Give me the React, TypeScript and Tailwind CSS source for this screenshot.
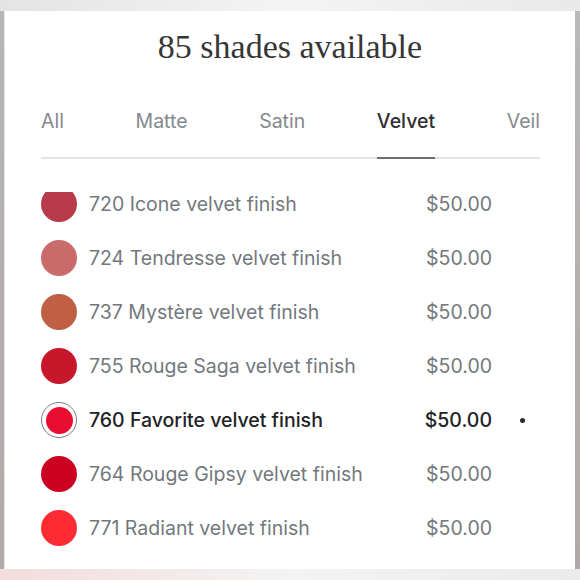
import React from 'react';

interface Shade {
  name: string;
  color: string;
  price: string;
  selected?: boolean;
}

const tabs = ['All', 'Matte', 'Satin', 'Velvet', 'Veil'];

const shades: Shade[] = [
  { name: '720 Icone velvet finish', color: '#b83b4b', price: '$50.00' },
  { name: '724 Tendresse velvet finish', color: '#c96b6b', price: '$50.00' },
  { name: '737 Mystère velvet finish', color: '#bf5f44', price: '$50.00' },
  { name: '755 Rouge Saga velvet finish', color: '#c8172a', price: '$50.00' },
  { name: '760 Favorite velvet finish', color: '#e80d30', price: '$50.00', selected: true },
  { name: '764 Rouge Gipsy velvet finish', color: '#cc0020', price: '$50.00' },
  { name: '771 Radiant velvet finish', color: '#ff2b33', price: '$50.00' },
];

const ShadeRow: React.FC<{ shade: Shade }> = ({ shade }) => (
  <div className="h-[54px] flex items-center shrink-0">
    {shade.selected ? (
      <div className="w-9 h-9 rounded-full border-[1.5px] border-[#7a7a7a] flex items-center justify-center shrink-0">
        <div className="w-[27px] h-[27px] rounded-full" style={{ backgroundColor: shade.color }}></div>
      </div>
    ) : (
      <div className="w-9 h-9 rounded-full shrink-0" style={{ backgroundColor: shade.color }}></div>
    )}
    <div
      className={`ml-3 flex-1 text-[19.5px] leading-[18px] ${
        shade.selected ? 'text-[#222326] font-medium' : 'text-[#73787d]'
      }`}
    >
      {shade.name}
    </div>
    <div
      className={`text-[19.5px] leading-[18px] ${
        shade.selected ? 'text-[#222326] font-medium' : 'text-[#73787d]'
      }`}
    >
      {shade.price}
    </div>
    <div className="w-[48px] h-[18px] flex items-center">
      {shade.selected && <div className="ml-[28px] w-[5px] h-[5px] rounded-full bg-[#2a2a2a]"></div>}
    </div>
  </div>
);

export default function App() {
  return (
    <div
      className="w-[580px] h-[580px] flex flex-col bg-[#ececec] overflow-hidden"
      style={{ fontFamily: 'Inter, "Noto Sans", sans-serif' }}
    >
      {/* top band */}
      <div className="h-[11px] shrink-0 bg-gradient-to-r from-[#e4e4e4] via-[#f4f4f4] to-[#e9e9e9]"></div>

      <div className="flex-1 flex min-h-0">
        <div className="w-[4px] bg-gradient-to-b from-[#b5b5b5] to-[#b3a8a8]"></div>
        <div className="w-[1px] bg-[#e6e6e6]"></div>

        {/* card */}
        <div className="flex-1 bg-white flex flex-col pl-[36px] pr-[35px] min-h-0">
          <h1
            className="mt-[16px] text-center text-[34px] leading-[40px] text-[#363636] ml-[-36px] mr-[-35px]"
            style={{ fontFamily: '"Liberation Serif", serif' }}
          >
            85 shades available
          </h1>

          {/* tabs */}
          <div className="mt-[42px] flex justify-between border-b-2 border-[#e4e4e4]">
            {tabs.map((tab) => (
              <div
                key={tab}
                className={`text-[19.5px] leading-6 pb-[24px] -mb-[2px] ${
                  tab === 'Velvet'
                    ? 'text-[#2d2e30] font-medium border-b-2 border-[#6e6e6e]'
                    : 'text-[#84898d] border-b-2 border-transparent'
                }`}
              >
                {tab}
              </div>
            ))}
          </div>

          {/* shade list, scrolled slightly so the first swatch sits under the tabs */}
          <div className="mt-[33px] flex-1 min-h-0 overflow-hidden">
            <div className="-mt-[15px] flex flex-col">
              {shades.map((shade) => (
                <ShadeRow key={shade.name} shade={shade} />
              ))}
            </div>
          </div>
        </div>

        <div className="w-[5px] bg-gradient-to-b from-[#b8b8b8] to-[#b0a8a8]"></div>
      </div>

      {/* bottom band */}
      <div className="h-[11px] shrink-0 bg-gradient-to-r from-[#f3dcdc] via-[#f3f3f3] to-[#ebebeb]"></div>
    </div>
  );
}
